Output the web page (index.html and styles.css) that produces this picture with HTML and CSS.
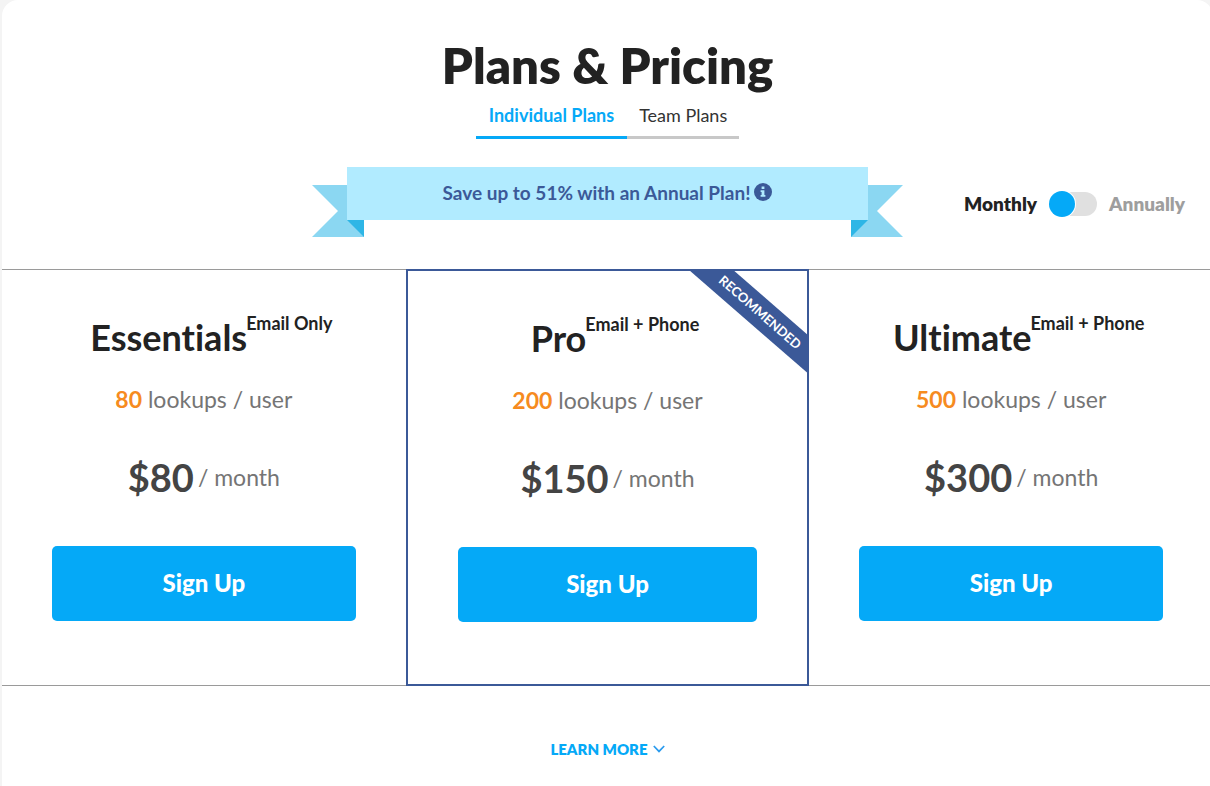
FILE: index.html
```html
<!DOCTYPE html>
<html lang="en">
<head>
<meta charset="utf-8">
<meta name="viewport" content="width=device-width, initial-scale=1">
<title>Plans &amp; Pricing</title>
<link rel="stylesheet" href="styles.css">
</head>
<body>
<main class="panel">
  <h1 class="title">Plans &amp; Pricing</h1>
  <nav class="tabs">
    <a class="tab tab-active" href="#individual">Individual Plans</a>
    <a class="tab" href="#team">Team Plans</a>
  </nav>

  <div class="offer">
    <div class="ribbon">
      <svg class="tail" width="52" height="52" viewBox="0 0 52 52" aria-hidden="true"><path fill="#8bd7f2" d="M0 0h52v52H0l26-26z"/><path fill="#2eb6e6" d="M35 35h17v17z"/></svg>
      <p class="ribbon-text">Save up to 51% with an Annual Plan!
        <svg class="info" width="18" height="18" viewBox="0 0 18 18" aria-hidden="true"><circle cx="9" cy="9" r="9" fill="#3b5998"/><path fill="#b1ebff" d="M7.6 3.6h2.8v2.5H7.6zM6.6 7.2h3.8v4.9h1v1.7H6.6v-1.7h1V8.9h-1z"/></svg>
      </p>
      <svg class="tail" width="52" height="52" viewBox="0 0 52 52" aria-hidden="true"><path fill="#8bd7f2" d="M52 0H0v52h52L26 26z"/><path fill="#2eb6e6" d="M17 35H0v17z"/></svg>
    </div>
    <div class="billing">
      <label for="annual">Monthly</label>
      <input class="switch" id="annual" type="checkbox" aria-label="Bill annually">
      <label class="muted" for="annual">Annually</label>
    </div>
  </div>

  <section class="plans">
    <article class="plan">
      <h2 class="name">Essentials<sup class="kind">Email Only</sup></h2>
      <p class="lookups"><b class="count">80</b> lookups / user</p>
      <p class="price"><b class="amount">$80</b> / month</p>
      <button class="signup" type="button">Sign Up</button>
    </article>
    <article class="plan plan-pro">
      <span class="flag">RECOMMENDED</span>
      <h2 class="name">Pro<sup class="kind">Email + Phone</sup></h2>
      <p class="lookups"><b class="count">200</b> lookups / user</p>
      <p class="price"><b class="amount">$150</b> / month</p>
      <button class="signup" type="button">Sign Up</button>
    </article>
    <article class="plan">
      <h2 class="name">Ultimate<sup class="kind">Email + Phone</sup></h2>
      <p class="lookups"><b class="count">500</b> lookups / user</p>
      <p class="price"><b class="amount">$300</b> / month</p>
      <button class="signup" type="button">Sign Up</button>
    </article>
  </section>

  <a class="more" href="#details">LEARN MORE
    <svg width="12" height="8" viewBox="0 0 12 8" fill="none" stroke="#2a9bee" stroke-width="1.7" aria-hidden="true"><path d="M.8 1 6 6.4 11.2 1"/></svg>
  </a>
</main>
</body>
</html>
```
FILE: styles.css
```css
* { box-sizing: border-box; }
body {
  margin: 0;
  overflow-x: hidden;
  background: #f4f4f4;
  color: #222;
  font-family: Lato, "Open Sans", sans-serif;
  font-variant-ligatures: none;
}
h1, h2, p { margin: 0; }

.panel {
  display: flex;
  flex-direction: column;
  min-height: 100vh;
  margin: 0 -3px 0 2px;
  padding-top: 34px;
  background: #fff;
  border-radius: 16px 16px 0 0;
}
.title {
  font-size: 49px;
  line-height: 62px;
  font-weight: 800;
  text-align: center;
}

.tabs { display: flex; justify-content: center; }
.tab {
  padding: 0 12px 2px;
  border-bottom: 3px solid #c8c8c8;
  color: #333;
  font-size: 18px;
  line-height: 38px;
  text-decoration: none;
}
.tab-active {
  padding: 0 13px 2px;
  border-color: #05a9f7;
  color: #05a9f7;
  font-weight: 700;
}

.offer {
  display: grid;
  grid-template-columns: 1fr auto 1fr;
  margin-top: 28px;
  padding-bottom: 32px;
}
.ribbon {
  grid-column: 2;
  display: flex;
  align-items: flex-start;
}
.tail { margin-top: 18px; }
.ribbon-text {
  z-index: 1;
  display: flex;
  align-items: center;
  justify-content: center;
  gap: 4px;
  width: 521px;
  height: 53px;
  margin: 0 -17px;
  padding-bottom: 3px;
  background: #b1ebff;
  color: #3b5998;
  font-size: 19px;
  font-weight: 700;
}
.billing {
  display: flex;
  align-items: center;
  align-self: end;
  justify-self: end;
  gap: 12px;
  margin: 0 28px 20px 0;
  font-size: 19px;
  line-height: 26px;
  font-weight: 800;
}
.muted { color: #9e9e9e; }
.switch {
  display: flex;
  align-items: center;
  appearance: none;
  width: 48px;
  height: 24px;
  margin: 0;
  border-radius: 12px;
  background: #e0e0e0;
}
.switch::before {
  content: "";
  flex: none;
  width: 26px;
  height: 26px;
  border-radius: 50%;
  background: #05a9f7;
  box-shadow: 0 0 0 1px #fff;
}
.switch:checked { justify-content: flex-end; }

.plans {
  display: grid;
  grid-template-columns: repeat(3, 1fr);
  border: solid #9a9a9a;
  border-width: 1px 0;
}
.plan {
  padding: 42px 50px 64px;
  text-align: center;
}
.plan-pro {
  position: relative;
  overflow: hidden;
  margin: -1px 0;
  padding-bottom: 62px;
  border: 2px solid #3b5998;
}
.flag {
  position: absolute;
  top: 27px;
  right: -43px;
  width: 180px;
  background: #3b5998;
  color: #fff;
  font-size: 13px;
  line-height: 29px;
  font-weight: 700;
  transform: rotate(41deg);
}
.name {
  display: flex;
  justify-content: center;
  padding-left: 15px;
  font-size: 36px;
  line-height: 50px;
  font-weight: 700;
  white-space: nowrap;
}
.kind {
  margin-left: -1px;
  font-size: 18px;
  line-height: 23px;
  font-weight: 700;
}
.lookups, .price {
  color: #757575;
  font-size: 23px;
}
.lookups { margin-top: 22px; line-height: 30px; }
.count { color: #f68b1f; font-weight: 700; }
.price {
  display: flex;
  align-items: center;
  justify-content: center;
  gap: 4px;
  margin-top: 38px;
  line-height: 50px;
}
.amount {
  color: #444;
  font-size: 38px;
  font-weight: 700;
}
.signup {
  width: 100%;
  height: 75px;
  margin-top: 44px;
  padding-bottom: 3px;
  border: 0;
  border-radius: 5px;
  background: #05a9f7;
  color: #fff;
  font-family: inherit;
  font-size: 24px;
  font-weight: 900;
}

.more {
  display: flex;
  align-items: center;
  align-self: center;
  gap: 5px;
  margin-top: 52px;
  color: #05a9f7;
  font-size: 15px;
  line-height: 22px;
  font-weight: 800;
  text-decoration: none;
}
```
